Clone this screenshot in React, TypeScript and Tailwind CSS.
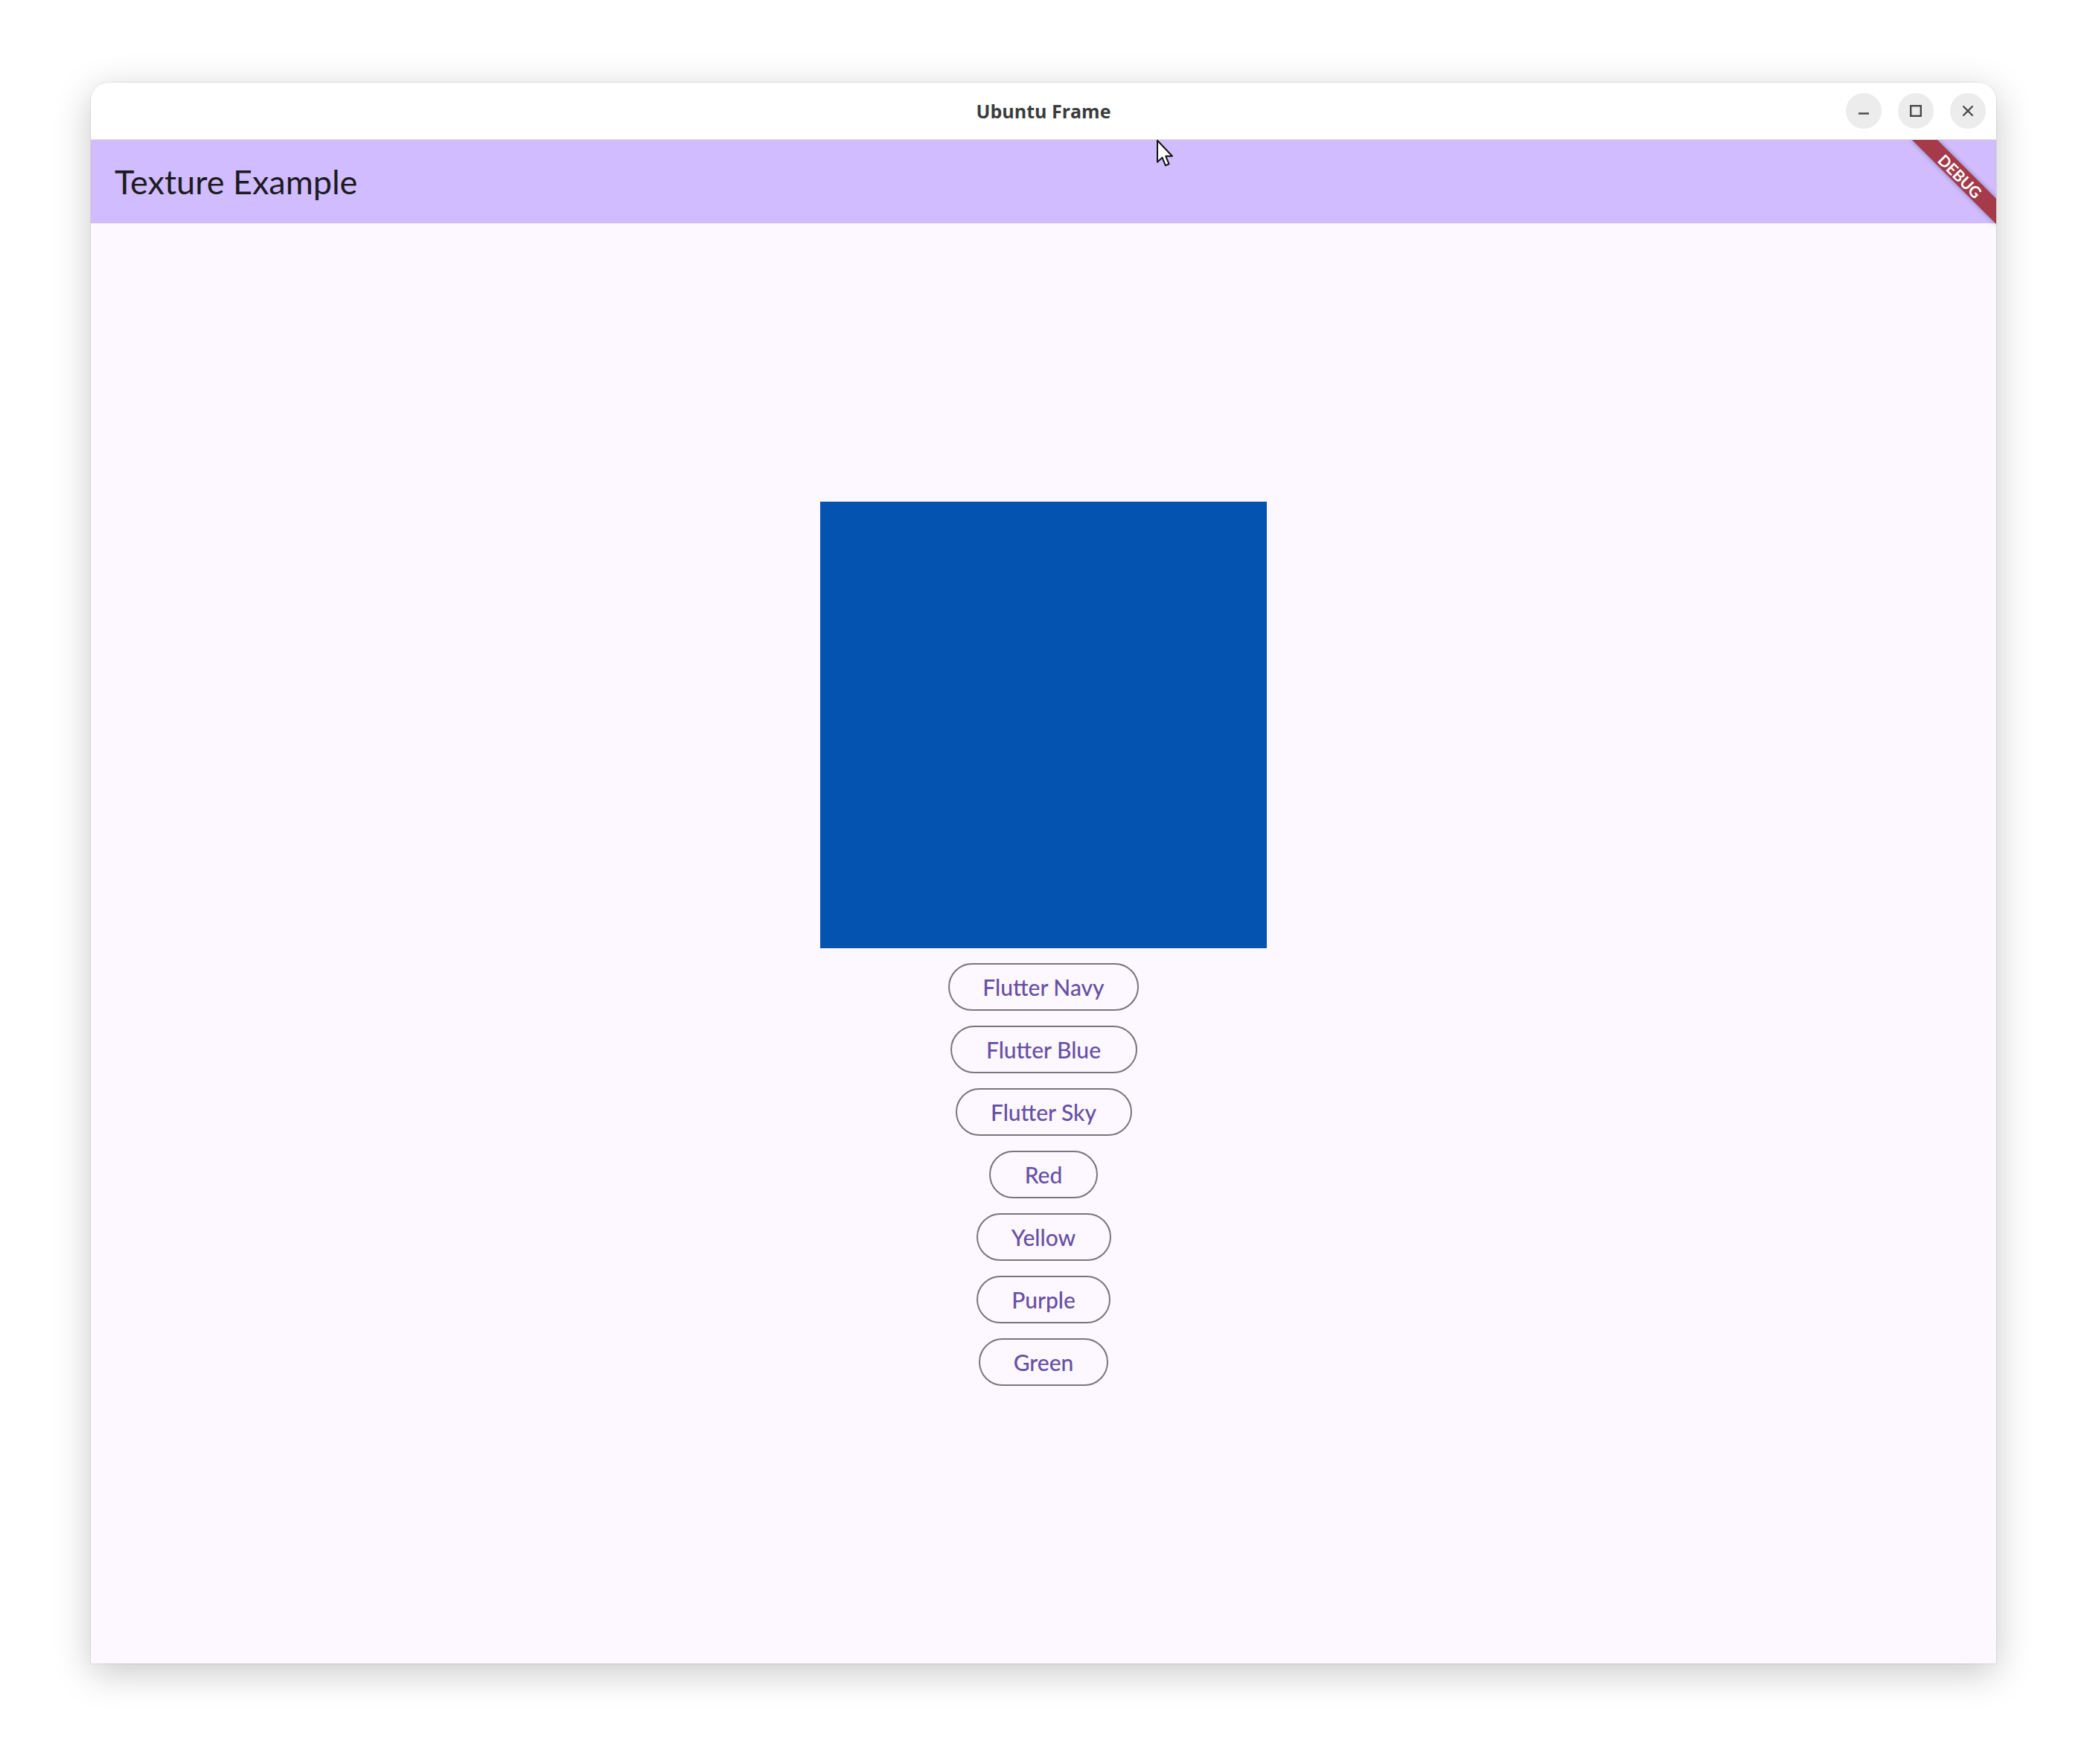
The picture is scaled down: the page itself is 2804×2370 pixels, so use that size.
import React from "react";

const buttons: { label: string; w: string }[] = [
  { label: "Flutter Navy", w: "w-[256px]" },
  { label: "Flutter Blue", w: "w-[251px]" },
  { label: "Flutter Sky", w: "w-[237px]" },
  { label: "Red", w: "w-[146px]" },
  { label: "Yellow", w: "w-[181px]" },
  { label: "Purple", w: "w-[180px]" },
  { label: "Green", w: "w-[174px]" },
];

function CircleBtn({ children }: { children: React.ReactNode }) {
  return (
    <div className="w-[48px] h-[48px] rounded-full bg-[#ececec] flex items-center justify-center">
      {children}
    </div>
  );
}

export default function App() {
  return (
    <div
      className="relative w-[2804px] h-[2370px] bg-white pl-[122px] pt-[111px] overflow-hidden"
      style={{ fontFamily: "Lato, 'Open Sans', sans-serif" }}
    >
      <div className="relative w-[2560px] h-[2124px] rounded-t-[24px] overflow-hidden flex flex-col bg-[#fdf7ff] shadow-[0_12px_50px_rgba(0,0,0,0.22),0_0_0_1px_rgba(0,0,0,0.07)]">
        {/* Title bar */}
        <div className="h-[77px] shrink-0 bg-white border-b border-[#dedede] grid grid-cols-[1fr_auto_1fr] items-center">
          <div />
          <div
            className="text-[25px] font-bold text-[#3c3c3c] leading-none"
            style={{ fontFamily: "'Open Sans', sans-serif" }}
          >
            Ubuntu Frame
          </div>
          <div className="flex justify-end items-center gap-[22px] pr-[14px]">
            <CircleBtn>
              <svg width="18" height="18" viewBox="0 0 18 18">
                <line x1="2" y1="12.5" x2="16" y2="12.5" stroke="#4a4a4a" strokeWidth="2.4" />
              </svg>
            </CircleBtn>
            <CircleBtn>
              <svg width="18" height="18" viewBox="0 0 18 18">
                <rect x="2.2" y="2.2" width="13.6" height="13.6" fill="none" stroke="#4a4a4a" strokeWidth="2.4" />
              </svg>
            </CircleBtn>
            <CircleBtn>
              <svg width="18" height="18" viewBox="0 0 18 18">
                <path d="M2.5 2.5 L15.5 15.5 M15.5 2.5 L2.5 15.5" stroke="#4a4a4a" strokeWidth="2.4" />
              </svg>
            </CircleBtn>
          </div>
        </div>

        {/* App content */}
        <div className="relative flex-1 flex flex-col">
          <div className="h-[112px] shrink-0 bg-[#d0bcff] flex items-center pl-[32px]">
            <span className="text-[45px] text-[#1d1b20] leading-none">Texture Example</span>
          </div>
          <div className="flex-1 flex flex-col items-center justify-center gap-[20px]">
            <div className="w-[600px] h-[600px] bg-[#0553b1]" />
            {buttons.map((b) => (
              <div
                key={b.label}
                className={`${b.w} h-[64px] rounded-full border-2 border-[#79747e] flex items-center justify-center text-[30px] font-medium text-[#6750a4] leading-none`}
              >
                {b.label}
              </div>
            ))}
          </div>

          {/* Debug banner */}
          <div className="absolute top-0 right-0 w-[150px] h-[150px] overflow-hidden pointer-events-none">
            <div className="absolute top-[36px] right-[-32px] w-[160px] h-[24px] rotate-45 bg-[#a53a4a] shadow-[0_0_6px_rgba(0,0,0,0.35)] flex items-center justify-center">
              <span className="text-white font-bold text-[21px] leading-none">DEBUG</span>
            </div>
          </div>
        </div>
      </div>

      {/* Mouse cursor */}
      <svg
        className="absolute left-[1553px] top-[187px]"
        width="24"
        height="38"
        viewBox="0 0 13 21"
      >
        <path
          d="M1 1 L1 17 L4.6 13.6 L7 19.5 L9.6 18.4 L7.2 12.6 L12 12.6 Z"
          fill="#ffffff"
          stroke="#111111"
          strokeWidth="1.1"
          strokeLinejoin="round"
        />
      </svg>
    </div>
  );
}
